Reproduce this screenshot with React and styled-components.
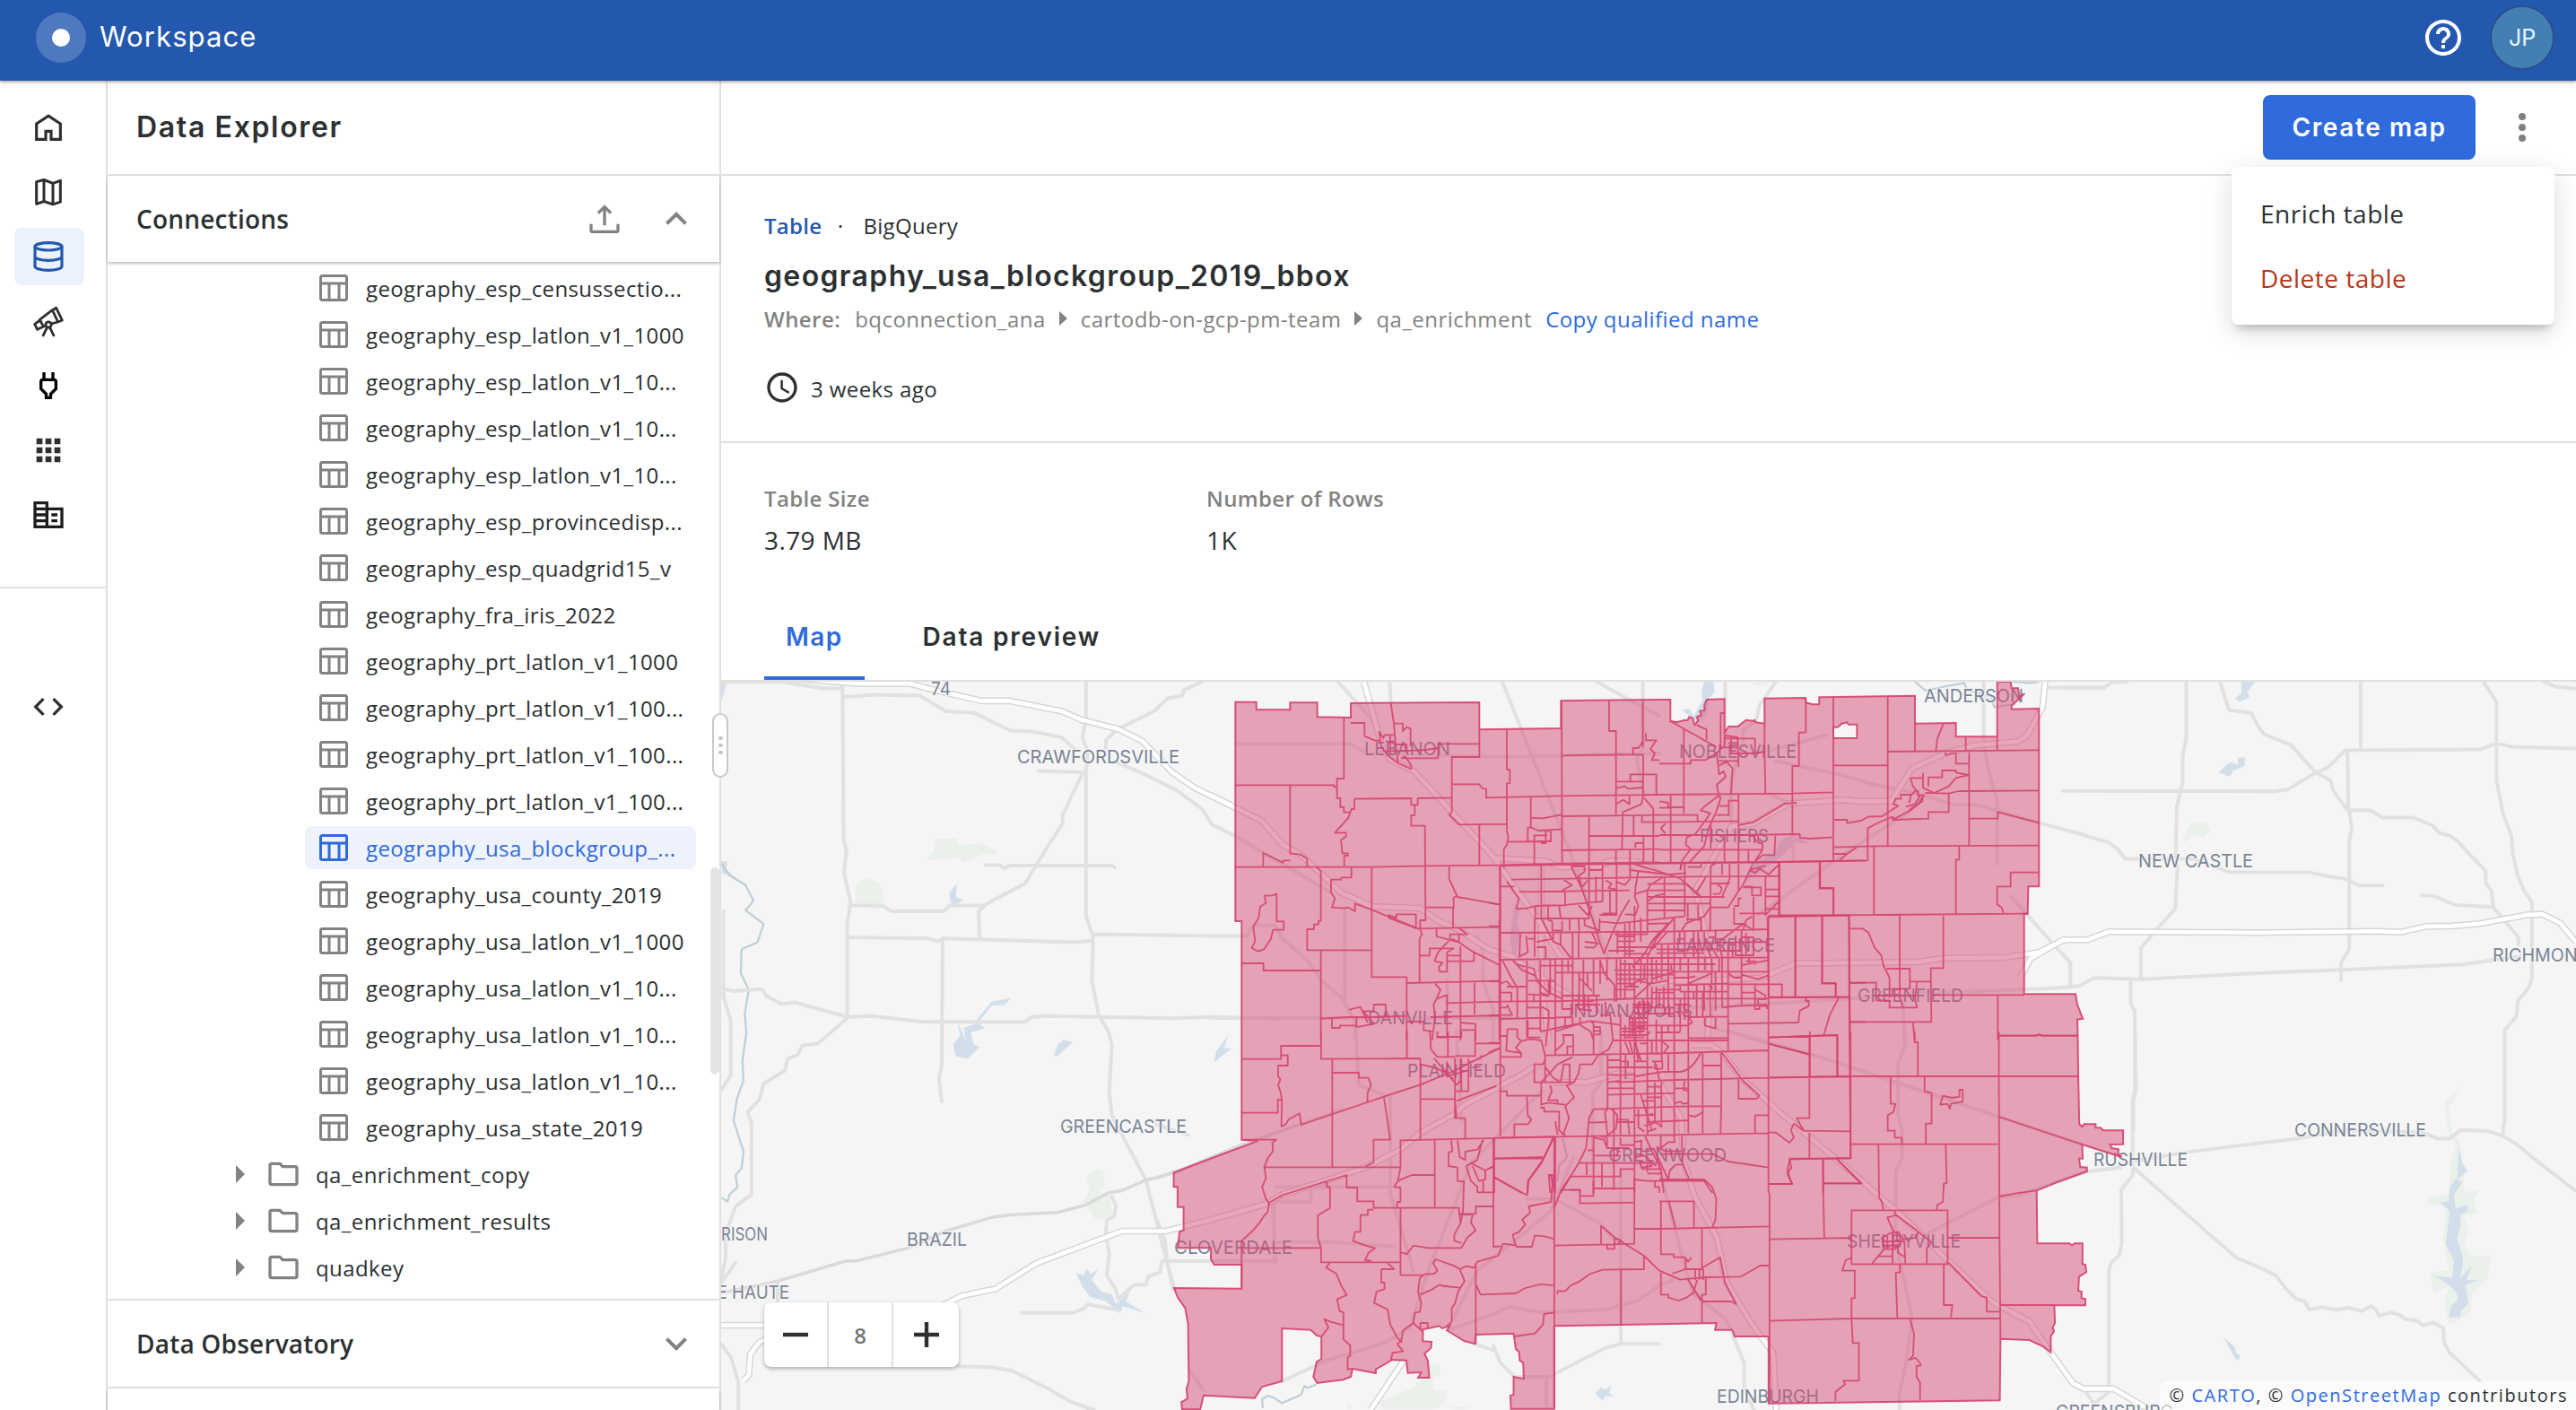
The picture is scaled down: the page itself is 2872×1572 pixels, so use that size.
import React from "react";
import styled, { createGlobalStyle } from "styled-components";
import {
  MdApps,
  MdCode,
  MdHelpOutline,
  MdAccessTime,
  MdExpandLess,
  MdExpandMore,
  MdOutlineFolder,
  MdOutlinePower,
} from "react-icons/md";

const c = {
  header: "#2458ae",
  primary: "#2f6bdb",
  text: "#2c3032",
  muted: "#828282",
  line: "#e0e0e0",
};
const sans = `"Open Sans", "Noto Sans", sans-serif`;
const display = `Inter, "Open Sans", sans-serif`;

const GlobalStyle = createGlobalStyle`
  *, *::before, *::after { box-sizing: border-box; }
  html, body { margin: 0; background: #fff; overflow: hidden; }
  body { font-family: ${sans}; color: ${c.text}; font-size: 24px; }
  svg { display: block; flex: none; }
`;

const Page = styled.div`
  display: flex;
  flex-direction: column;
  width: 2872px;
  height: 1572px;
  overflow: hidden;
`;

/* ---------- header ---------- */
const Header = styled.header`
  display: flex;
  align-items: center;
  height: 90px;
  flex: none;
  padding: 0 24px 6px 40px;
  background: ${c.header};
  color: #fff;
  box-shadow: 0 1px 4px rgba(0, 0, 0, 0.45);
  z-index: 2;
`;
const Logo = styled.div`
  display: grid;
  place-items: center;
  width: 56px;
  height: 56px;
  border-radius: 50%;
  background: rgba(255, 255, 255, 0.2);
  &::after {
    content: "";
    width: 20px;
    height: 20px;
    border-radius: 50%;
    background: #fff;
  }
`;
const Brand = styled.div`
  margin-left: 15px;
  margin-top: -3px;
  font: 400 31px/40px ${display};
  letter-spacing: 1.1px;
`;
const HeaderActions = styled.div`
  display: flex;
  align-items: center;
  gap: 28px;
  margin-left: auto;
`;
const Avatar = styled.div`
  display: grid;
  place-items: center;
  width: 72px;
  height: 72px;
  border-radius: 50%;
  border: 2px solid #2a4f8c;
  background: #437fb5;
  color: #e6f4ff;
  font: 400 25px/30px ${display};
`;

/* ---------- navigation rail ---------- */
const Body = styled.div`
  display: flex;
  flex: 1;
  min-height: 0;
`;
const Rail = styled.nav`
  width: 120px;
  flex: none;
  border-right: 2px solid ${c.line};
  padding-top: 20px;
`;
const RailGroup = styled.div`
  display: flex;
  flex-direction: column;
  gap: 8px;
  padding-left: 16px;
`;
const RailItem = styled.div`
  display: grid;
  place-items: center;
  width: 78px;
  height: 64px;
  padding-right: 2px;
  border-radius: 8px;
  color: ${(p) => (p.$active ? c.header : p.$color || c.text)};
  background: ${(p) => (p.$active ? "#ebf2fb" : "transparent")};
`;
const RailDivider = styled.div`
  height: 2px;
  margin: 48px 0 100px;
  background: ${c.line};
`;

/* ---------- explorer panel ---------- */
const Panel = styled.aside`
  display: flex;
  flex-direction: column;
  position: relative;
  width: 684px;
  flex: none;
  border-right: 2px solid ${c.line};
  background: #fff;
`;
const PanelTitle = styled.h1`
  display: flex;
  align-items: center;
  height: 106px;
  flex: none;
  margin: 0;
  padding: 0 32px 0;
  border-bottom: 2px solid ${c.line};
  font: 600 32px/40px ${display};
  letter-spacing: 1.65px;
`;
const Section = styled.div`
  display: flex;
  align-items: center;
  height: ${(p) => p.$height}px;
  flex: none;
  padding: 0 24px 0 32px;
  font-size: 28px;
  font-weight: 600;
  letter-spacing: 0.2px;
  border-top: ${(p) => (p.$ruled ? `2px solid ${c.line}` : "0")};
  border-bottom: ${(p) => (p.$ruled ? `2px solid ${c.line}` : "0")};
  box-shadow: ${(p) => (p.$ruled ? "none" : "0 2px 3px rgba(0,0,0,.26)")};
  z-index: 1;
  & > span { margin-right: auto; }
  & > svg { color: ${c.muted}; }
  & > svg + svg { margin-left: 36px; }
`;
const Tree = styled.div`
  display: flex;
  flex-direction: column;
  gap: 4px;
  flex: 1;
  padding-top: 5px;
`;
const Leaf = styled.div`
  display: flex;
  align-items: center;
  height: 48px;
  margin: 0 26px 0 220px;
  padding-left: 16px;
  gap: 20px;
  border-radius: 8px;
  white-space: nowrap;
  letter-spacing: 0.39px;
  color: ${(p) => (p.$active ? c.primary : c.text)};
  background: ${(p) => (p.$active ? "#edf2fc" : "transparent")};
  & > svg { color: ${(p) => (p.$active ? c.primary : c.muted)}; }
`;
const FolderRow = styled.div`
  display: flex;
  align-items: center;
  height: 48px;
  padding-left: 143px;
  letter-spacing: 0.41px;
  & > svg { color: ${c.muted}; }
  & > svg + svg { margin: 0 16px 0 23px; }
`;
const ScrollThumb = styled.div`
  position: absolute;
  right: 0;
  top: 877px;
  width: 10px;
  height: 231px;
  border-radius: 5px;
  background: #e4e6e6;
`;
const Handle = styled.div`
  position: absolute;
  right: -10px;
  top: 705px;
  width: 18px;
  height: 72px;
  z-index: 3;
  display: flex;
  flex-direction: column;
  align-items: center;
  justify-content: center;
  gap: 4px;
  background: #fff;
  border: 2px solid #c9c9c9;
  border-radius: 9px;
  & > i { width: 5px; height: 4px; border-radius: 2px; background: #c4c4c4; }
`;

/* ---------- main column ---------- */
const Main = styled.main`
  display: flex;
  flex-direction: column;
  flex: 1;
  min-width: 0;
  position: relative;
`;
const Toolbar = styled.div`
  display: flex;
  align-items: center;
  justify-content: flex-end;
  height: 106px;
  flex: none;
  padding: 0 56px 0 0;
  border-bottom: 2px solid ${c.line};
`;
const CreateButton = styled.button`
  width: 237px;
  height: 72px;
  margin-right: 48px;
  padding: 0;
  border: 0;
  border-radius: 8px;
  background: ${c.primary};
  color: #fff;
  font: 600 28px/36px ${display};
  letter-spacing: 1.6px;
`;
const Kebab = styled.div`
  display: flex;
  flex-direction: column;
  gap: 4px;
  & > i { width: 8px; height: 8px; border-radius: 50%; background: #7f7f7f; }
`;
const Menu = styled.div`
  position: absolute;
  right: 24px;
  top: 96px;
  width: 360px;
  padding: 16px 0;
  border-radius: 8px;
  background: #fff;
  box-shadow: 0 10px 10px -6px rgba(0, 0, 0, 0.2), 0 8px 30px rgba(0, 0, 0, 0.14);
  z-index: 4;
`;
const MenuItem = styled.div`
  display: flex;
  align-items: center;
  height: 72px;
  padding: 0 32px;
  font-size: 28px;
  letter-spacing: 0.5px;
  color: ${(p) => (p.$danger ? "#b8381b" : c.text)};
`;
const Details = styled.section`
  display: flex;
  flex-direction: column;
  height: 298px;
  flex: none;
  padding: 37px 48px 0;
  border-bottom: 2px solid ${c.line};
`;
const Line = styled.div`
  display: flex;
  align-items: center;
  height: ${(p) => p.$h}px;
  gap: ${(p) => p.$gap || 0}px;
  margin-top: ${(p) => p.$top || 0}px;
  color: ${(p) => p.$color || c.text};
  letter-spacing: ${(p) => p.$ls || 0}px;
  white-space: nowrap;
`;
const Strong = styled.span`
  font-weight: 600;
  margin-right: 1px;
  color: ${(p) => p.$color || "inherit"};
`;
const Dot = styled.span`
  width: 45px;
  padding-right: 6px;
  text-align: center;
`;
const Age = styled.span`
  padding-top: 3px;
`;
const TableName = styled.h2`
  margin: 17px 0 0;
  font: 600 32px/44px ${display};
  letter-spacing: 1.35px;
`;
const CopyLink = styled.span`
  color: ${c.primary};
`;
const Stats = styled.section`
  display: flex;
  height: 162px;
  flex: none;
  padding: 44px 48px 0;
`;
const Stat = styled.div`
  width: 493px;
  & > span { display: block; font-size: 24px; font-weight: 600; line-height: 36px; color: ${c.muted}; letter-spacing: 0.35px; }
  & > b { display: block; margin-top: 8px; font-size: 28px; font-weight: 400; line-height: 40px; letter-spacing: 0.4px; }
`;
const Tabs = styled.div`
  display: flex;
  gap: 41px;
  height: 104px;
  flex: none;
  padding: 0 48px;
  border-bottom: 2px solid ${c.line};
`;
const Tab = styled.div`
  display: flex;
  align-items: center;
  padding: 10px 24px 0;
  border-bottom: 4px solid ${(p) => (p.$active ? c.primary : "transparent")};
  color: ${(p) => (p.$active ? c.primary : c.text)};
  font: 600 28px/36px ${display};
  letter-spacing: ${(p) => p.$ls}px;
`;
const MapArea = styled.div`
  position: relative;
  flex: 1;
  min-height: 0;
  overflow: hidden;
  background: #f5f5f5;
`;
const ZoomControl = styled.div`
  position: absolute;
  left: 48px;
  bottom: 48px;
  display: grid;
  grid-template-columns: 72px 72px 73px;
  height: 72px;
  border-radius: 8px;
  background: #fff;
  color: ${c.text};
  box-shadow: 0 2px 4px rgba(0, 0, 0, 0.3);
`;
const ZoomCell = styled.div`
  display: grid;
  place-items: center;
  color: ${(p) => (p.$muted ? "#6f7577" : "inherit")};
  font-weight: 600;
  border-right: 2px solid ${c.line};
  &:last-child { border-right: 0; }
`;
const Attribution = styled.div`
  position: absolute;
  right: 0;
  bottom: 0;
  height: 32px;
  padding: 0 9px 0 11px;
  border-top-left-radius: 8px;
  background: rgba(255, 255, 255, 0.55);
  font-size: 20px;
  line-height: 31px;
  letter-spacing: 1.54px;
  white-space: nowrap;
  & > span { color: ${c.primary}; }
`;

/* ---------- icons ---------- */
const Stroke = ({ size = 40, w = 2, children }) => (
  <svg width={size} height={size} viewBox="0 0 24 24" fill="none" stroke="currentColor" strokeWidth={w}>
    {children}
  </svg>
);
const HomeIcon = () => (
  <Stroke w={1.9}><path d="M4 20V9.6L12 4.3L20 9.6V20H13.8V14.6H10.2V20Z" /></Stroke>
);
const MapIcon = () => (
  <Stroke w={1.8}><path d="M4 5.2L9 3.9L15 6.2L20 4.4V18.7L15 20.3L9 18.3L4 20Z M9 4V18.4 M15 6V20.2" strokeLinejoin="round" /></Stroke>
);
const DatabaseIcon = () => (
  <Stroke w={1.9}>
    <ellipse cx="12" cy="5.3" rx="9" ry="2.5" />
    <path d="M3 5.3V18.6c0 1.4 4 2.6 9 2.6s9-1.2 9-2.6V5.3 M3 12c0 1.4 4 2.6 9 2.6s9-1.2 9-2.6" />
  </Stroke>
);
const TelescopeIcon = () => (
  <Stroke w={1.7}>
    <path d="M14.6 4.6L17.2 3.2L21.2 11.4L18.4 12.6Z M14.6 4.6L6.2 11L8.6 15.6 M18.4 12.6L14 13.7 M6.4 11.4L2.8 14L4.6 17.6L8.8 15.6L10.2 15" strokeLinejoin="round" />
    <circle cx="12" cy="14.4" r="1.9" />
    <path d="M11.2 16L8.2 22.2 M12.8 16L15.8 22.2" />
  </Stroke>
);
const BuildingIcon = () => (
  <svg width="40" height="40" viewBox="0 0 24 24" fill="currentColor">
    <path d="M12 7V3H2v18h20V7H12zm-2 12H4v-2h6v2zm0-4H4v-2h6v2zm0-4H4V9h6v2zm0-4H4V5h6v2zm10 12h-8V9h8v10zm-2-8h-4v2h4v-2zm0 4h-4v2h4v-2z" />
  </svg>
);
const UploadIcon = () => (
  <Stroke>
    <path d="M3 15.4V19.6a1 1 0 0 0 1 1H20a1 1 0 0 0 1-1V15.4 M12 4V16.4 M7.7 8.2L12 3.9L16.3 8.2" />
  </Stroke>
);
const TableIcon = () => (
  <svg width="32" height="30" viewBox="0 0 32 30" fill="none" stroke="currentColor" strokeWidth="3">
    <rect x="1.5" y="1.5" width="29" height="27" rx="2" />
    <path d="M2 10H30 M11 10V28 M22 10V28" />
  </svg>
);
const Triangle = ({ w, h }) => (
  <svg width={w} height={h} viewBox="0 0 10 20" preserveAspectRatio="none" fill="currentColor">
    <path d="M0 0L10 10L0 20Z" />
  </svg>
);

/* ---------- map data ---------- */
// Every map sheet has its own origin and scale: [x, y, units per pixel in x, units per pixel in y].
const sheets = {
  nw: [1350, 760, 3, 3],
  ne: [1850, 760, 3, 3],
  sw: [1290, 1150, 2.8, 3],
  se: [1850, 1150, 2.8, 3],
  city: [1660, 950, 3, 3],
  west: [800, 740, 2.24, 1.8846],
  east: [2300, 740, 2.7413, 1.8846],
};
const outline = [
  ["nw", "82,68 152,68 152,94 265,94 265,70 356,70 356,118 468,120 468,72 898,69 898,160 1171,156 1171,64 1500,60"],
  ["ne", "37,60 37,132 60,135 80,130 95,128 100,118 112,122 118,145 130,130 125,118 140,112 136,98 152,95 150,80 158,60 218,58 218,170 232,150 262,150 290,128 318,132 318,126 322,136 352,140 352,56 488,54 490,70 512,76 535,76 535,52 855,47 855,140 992,138 992,184 1130,184 1130,0 1175,0 1178,22 1200,22 1204,50 1222,40 1178,80 1178,92 1270,90 1270,685 1234,685 1232,776 1220,776 1220,1045 1392,1045 1398,1080 1417,1127 1398,1130"],
  ["se", "1306,0 1308,150 1311,310 1320,318 1326,310 1362,310 1362,322 1378,322 1385,331 1448,331 1448,377 1407,378 1412,390 1434,394 1432,408 1443,420 1320,378 1322,425 1310,425 1314,453 1335,455 1335,468 1240,505 1178,532 1180,709 1280,709 1288,715 1296,709 1321,709 1321,778 1330,780 1333,805 1310,820 1308,868 1318,870 1318,892 1330,894 1330,916 1233,916 1235,975 1228,990 1232,1004 1222,1020 1222,1073 1200,1055 1155,1032 1065,1028 1063,1234 341,1244 341,1020 235,1020 228,998 174,998 178,975 0,979"],
  ["sw", "1240,985 1240,1262 1105,1262 1103,1218 1113,1215 1113,1155 1145,1162 1143,1108 1132,1100 1130,1072 1120,1062 1113,1010 995,1014 993,1045 960,1036 905,1000 914,985 890,993 880,985 850,992 830,996 830,1036 857,1038 855,1058 835,1078 845,1100 850,1158 815,1158 825,1140 783,1142 778,1100 735,1098 683,1130 683,1143 610,1128 605,1155 580,1165 500,1176 488,1155 498,1105 513,1095 513,1020 500,1018 480,998 390,993 390,1170 328,1188 305,1226 145,1217 135,1264 78,1264 76,1240 95,1228 92,1195 99,1170 97,980 88,925 65,890 53,858 264,860 264,780 178,780 168,762 168,724 65,724 70,670 83,665 83,587 64,587 64,520 52,520 52,472 200,412 315,366 264,362"],
  ["nw", "103,1200 103,801 82,801"],
];
const hole = [["ne", "582,152 597,152 610,140 628,136 632,143 661,143 661,189 582,189"]];

const toPath = (ring) =>
  "M" +
  ring
    .flatMap(([sheet, pts]) => {
      const [ox, oy, sx, sy] = sheets[sheet];
      return pts.split(" ").map((p) => {
        const [x, y] = p.split(",").map(Number);
        return `${(ox + x / sx).toFixed(1)} ${(oy + y / sy).toFixed(1)}`;
      });
    })
    .join("L") +
  "Z";

const blocks = {
  nw: "M82 346H412V352H422 M445 120V324H422V390H433V420H445V437H465 M265 346V575L300 578L322 592V618 M175 618V573L242 606V598H265 M82 620H540L718 616L968 614L1180 608L1500 604 M468 138H514V182L548 197H566 M602 72L612 140H642V165L655 152L668 158V215 M612 140L618 210L626 270 M562 166L570 215L590 245L625 272L670 292V280L650 250L638 256H760V222L720 228L640 232 M760 222V208H898 M562 166L576 188L582 178H616 M600 178V240 M575 232H650 M620 210H655V240 M585 200H618 M898 160V252H806V437L797 445L830 478L990 476 M480 392L670 390V412H692V390L806 388 M682 412V447H670V482H716L718 800 M480 392V426H470L460 455L415 505H452V518L435 530L440 574H458V582H446V618 M808 343H897L910 358H921V388L1171 382L1500 378 M990 160V294H1000V340H990V500L995 520L990 545L980 560V625 M1173 64L1175 606 M1332 64V165H1355V445 M1173 247L1357 244H1446 M1445 64V220 M1070 386V488H1060V535 M1070 455L1110 457L1171 445 M1070 488L1095 498L1171 494 M990 536L1110 534H1137V500H1120V540H1104 M1082 610V514H1125 M898 478V614 M1171 450L1500 446 M1265 450V605 M1265 516H1500 M1171 564L1500 560 M1445 172V200L1430 222L1412 222V244 M1455 172V196H1490L1470 225L1485 240L1475 262H1500 M1446 244V380 M1357 334H1446 M1403 334V310H1490V378 M1357 356L1385 350L1395 358L1446 354 M1357 408L1380 395L1400 410V378 M1446 380L1440 410L1378 436L1375 560 M1450 390L1480 425V605 M1414 446V514 M1442 446V470H1500 M1355 560V604 M1402 560V604 M1447 520V604 M1420 556V540H1447 M352 620L368 634V800H360V812H345V828H322V898H538V620 M368 898V1200 M205 715L180 716L184 740L165 752L160 790L142 820L148 868L137 890L158 902L178 895L200 862L208 830H244V802H220V710Z M103 942H176V966H368 M470 620V655H436V662H402V706L415 725L405 755L445 758L460 755L482 768V742L540 764L700 828V798H720 M538 764V988H655V1200 M595 780L620 790V778H686V825L595 790Z M718 755H810V822 M797 618V660L823 716L812 722V760 M823 720L870 728L968 746 M700 828L706 845L698 860V1010 M690 826L966 820 M655 1008L835 1004L967 1000 M835 885V1200 M882 1004V1112 M755 825V852L830 872L880 905L966 948 M830 825L858 845H800V860 M806 860L830 872V846 M880 905V935H790 M700 916H732V892H812L790 905V970H765L762 955L775 940L748 935L760 905L800 862 M790 916H835 M750 1010L768 1030L755 1060L745 1080L750 1120L740 1200 M758 1060L790 1048V1190H755 M792 1075L967 1070 M735 1122L967 1116 M655 1137H712V1166L740 1170 M835 1140L885 1145V1200 M835 1165H885 M368 1127L460 1122H585V1080H545V1102H510L545 1145L487 1155V1125 M463 1097L500 1088L525 1140 M405 1127V1158H432V1150H487 M540 1122L655 1118 M967 618V796H965V1200",
  ne: "M37 132L190 218 M82 160V442 M0 274H105V262H155L190 240L218 215V180 M125 145L158 160V195 M205 218V105H217 M0 378L445 374L582 370 M352 140V240L355 372 M220 190H320V240L352 234 M218 180L262 186L265 285 M195 265H262 M240 190V240H320 M230 205H262V220H200 M192 240L200 310L215 300L222 318L192 345L198 375L205 390L190 435L165 490L150 550L100 605 M240 372L245 290L225 268L200 280 M200 380L160 410L138 430L170 440L150 470L120 510L92 520L88 545L105 560L75 600L70 630 M0 400L30 405V420H80 M0 422H37 M0 446H128V468 M0 470L265 466 M0 513H265L470 510V522L505 525L582 520 M200 416H232V398H265V605 M190 446H232V416 M0 562H265 M38 380V605 M265 378V470 M20 475L5 490L20 508 M172 470V558 M218 513V605 M265 480L315 470L420 408L460 405 M445 280V508 M445 282H467V170H490V54 M298 562V605 M265 562H345L320 600 M330 515L332 540H345V562 M388 515L385 580H345L310 610 M318 515V540 M0 606L400 603L600 600L697 598V490L740 468L780 452 M582 52V600 M764 50V550 M582 280H762 M764 234L1270 229 M582 462H628V473L675 465L697 452L745 450L800 415 M582 554L718 550L1270 548 M718 550V780 M1036 232V548 M992 234V274H1036 M855 138V232 M950 140L930 190L925 230 M1025 186V229 M1130 184V229 M1036 366L1270 364 M1036 458H1132V436L1270 472 M955 230L958 246L992 236 M840 322H882V305 M840 322L848 350L858 362L845 378H808V392H790L783 410L800 415 M882 322V355L920 372L968 350L992 322L1034 312L992 304V297H946V320H900V350 M882 378L880 400L840 430L780 462L782 450 M885 378L865 410L835 430 M858 362L870 385L855 410L825 418 M842 378L836 405 M865 362V380H888 M780 462L900 458V436H968V374L890 372 M968 374L1000 366L1036 366 M536 603V692H582V780 M400 604V782L718 780L1232 776 M1003 548V595H992V776 M1270 638H1175V685H1130V745L1145 755L1152 776 M582 576H628L660 554 M600 600L628 576 M362 787L634 782 M362 787L366 1055 M455 787V1055 M544 787V1010H590V1052 M634 782L638 1200 M804 780V1062 M950 778V958H908L910 1138H638 M366 1055H638 M634 826H680L700 840L720 890L742 915L750 950L770 990V1058 M760 960H838V1027H780V1050 M838 1003H908 M638 1008L725 1006V1066H770V1090H862L855 1060L862 1005 M910 1048H1220 M1132 1048V1200 M1132 1184H1260L1268 1180L1280 1184H1400 M848 1138L854 1200 M730 1050H862 M806 1060L815 1090",
  sw: "M264 92H387V48H512 M512 0V92L822 90 M780 0V90 M822 90V360 M387 80H408V114H378V150L385 160L378 180L385 200L390 230L388 318L402 310L410 295L445 274L450 312L708 218L822 178L930 130L1070 55 M264 272H377V228H390 M547 94V452 M547 138H630V155H660L668 180L657 205V235 M708 218L728 362H676V438L650 452 M332 454H760V364L1240 352 M264 362H372L360 372L362 400L345 425L335 455L340 490L328 520L340 560L350 575L345 605L335 615L320 640L300 665L275 690L264 700V860 M345 575L390 548L592 480V522H625V568H676V590 M530 500V520H540V590L502 615V690L512 724V772H758 M262 724H512 M760 454L752 500L795 480H868 M752 500L740 520L760 522V570H750V590 M867 364V590 M676 590H943V610H995V585H1050 M676 596H658V614H635V670H618L612 700L640 712L680 725L660 740L650 765L670 768 M760 590V815H835 M760 738L780 745L800 716L845 724H950L968 690L995 665L980 640L985 612H945 M943 610L948 640L928 680V700L950 708 M918 364L922 400L910 405V450L938 455V500L958 502L955 600L948 640 M938 364L945 420L962 430V402L1000 395L1020 362 M965 450L1000 430L1015 365 M822 226H930V290H962V360 M930 90V225L935 290 M950 90V200H930 M972 90V200H945 M935 232L1060 182 M1050 360V720L1080 718 M1050 425H1205 M1050 485L1155 548L1160 498L1200 440L1240 352 M965 450L980 500L1000 520V538H1050 M980 440L1025 465V495L1005 500L985 450 M1018 500V538 M1025 465L1050 450 M822 110L870 122L905 140L935 178L948 165V90 M905 100V150L970 130 M852 0L855 60L875 85H930 M875 0V18H950V0 M908 0V85 M993 0V82H930 M995 40H1070 M970 105L1010 90L1012 80 M985 120L1010 118 M865 90L885 115L925 160 M1240 352V1262 M1240 590L1262 530L1290 485 M1262 530H1320V575L1490 572 M1362 500V550H1320 M1490 490V710L1240 716 M1386 712V650L1430 690L1520 750L1568 800 M1520 750V795L1390 797L1350 812L1320 835L1290 850L1275 868H1250V878 M1405 710V727H1428V690 M1430 690L1450 700L1440 708 M1448 797V980 M1490 660H1568 M1228 480L1235 510L1230 570L1160 585L1165 605L1140 630L1150 645L1130 670L1110 680L1120 715L1080 710L1065 750L1000 770L990 790L965 785L945 795L930 785L870 762L862 775L875 800L865 810L835 812L820 825L815 870L825 910L820 938L805 940L800 975 M1120 720H1170L1180 682L1210 685L1240 694 M995 775V1045 M945 795L960 835L940 870L930 910L920 925V970L905 985 M822 880L860 862L880 848L900 852L945 857 M895 848V856 M905 848V856 M995 845L1010 880L1120 876L1150 858L1200 845L1240 850 M1240 940L1208 945L1205 980L1180 1010L1115 1020 M540 772L528 790L560 810L575 850L592 882L562 895L570 935L582 940V1030L603 1050V1085L595 1090V1130L610 1128 M700 795H740L720 775 M700 795V840H710V862L685 870L678 908L720 930L728 980L750 1025L765 1040 M580 982L540 970L522 962L535 990L515 1018 M800 975L768 1000L762 1035L750 1045L768 1070L735 1075L730 1100 M800 975L830 1005 M822 995V975H845V992",
  se: "M344 20L556 12V150 M344 42L468 76 M470 0V150 M597 0V425H408L400 465L413 510H344 M797 0V36H807V150 M1060 0V150L1062 690 M1060 14H1175L1185 10L1195 14H1305 M344 154L597 150H1308 M722 150V242H737L730 270L713 280V332H735V355H757V377 M828 150V200L850 206V308H832V377 M597 377H1057 M877 245L885 215L915 222L937 218V195H947V235L910 242L907 258L900 242Z M1060 285L1320 378 M1060 552L1110 542L1175 532 M511 425V508H632L552 425 M511 508L515 690 M684 377L686 555L695 570L700 598 M894 377L897 508H888L885 570L868 580L865 595 M344 695L600 690 M600 598H900V778H600Z M900 690H1062L1065 1030 M600 756L582 765L571 800H610V892H600V960 M344 968L600 960H1065 M751 778V806H738L743 958 M888 778V915H915L910 955 M900 770L1005 885L1022 890V937H1065 M1065 915H1233 M600 960L604 1042H623V1168H575L580 1180L550 1205V1236 M782 960L795 1010L792 1085L780 1098L800 1092L815 1110V1118H803V1155L814 1175V1232 M737 598V615L712 622L732 672 M737 612L790 655L850 705L835 725V775 M695 690L720 675L745 670L760 690L750 710L735 728H700Z M695 702H765L768 775 M728 675V775 M665 775L700 730 M680 752H728 M745 710V740L768 755 M760 695L800 690L808 672 M712 680V728 M695 715H748 M742 668V700 M344 540V1244 M0 495H140L165 520L178 560L175 630L165 655 M0 660L341 652 M133 660V795 M0 568H108V655 M30 570L50 655 M5 570V745H45V755H80L90 770L100 755 M82 755V795L40 810 M135 790L190 755L205 840L240 912L225 903H135L100 850 M133 880V975 M145 825V880H133 M0 800L65 830L145 822L255 820L315 783H344 M90 830L130 900 M112 795V830 M125 795V830 M137 795V830 M82 795H137 M118 830L105 880 M5 800V880H28V890L60 900L85 890L110 870",
  city:
    // township lines and outer ring
    "M38 45L655 37L972 33L1260 28 M38 45V950 M38 955L350 950L935 940 M972 33V212 M935 215V1140 M935 212L1205 212 M935 215V352 M0 170L38 176 M0 248H38 M0 432H38 M0 548L38 546 M0 638H38 M0 670L38 655 " +
    // north west
    "M75 92L655 82L970 80 M60 98L100 155L92 190L125 188L155 180V222 M38 115H85 M100 133L470 128 M255 133V178L155 180 M175 45V222 M175 178H240L380 165 M198 178V222 M235 178L240 222 M250 92L278 110L245 128 M275 48H320V65L300 80L310 118L330 95 M275 48L310 120L345 220L370 300L385 340 M335 37V220 M358 82V165 M380 37V165 M335 60H380 M390 95L410 105L400 120L425 125 M405 128V210 M427 40V210H370 M380 205H427 M300 178L330 210L345 180 M153 222V350 M153 222H335V205 M175 222L215 300L240 310L275 355 M195 225L212 232V262H245V230 M300 225L302 270 M270 225V262 M320 222V245L370 262 M38 270L620 265L758 262L935 258 M105 272L102 350L130 335L125 280 M160 300L215 290V270 M160 318H190V355 M240 270V308 M300 270V355 M320 300L365 305L350 320L320 318 M370 222V268L345 270L360 300 M38 360L460 354L935 352 M130 290H152 " +
    // north
    "M472 40V90L455 110L427 100 M472 60L600 75L660 70 M485 40L560 62L640 88L700 145 M500 60L490 120L488 150L500 180L490 210L455 208 M470 160L440 210L400 300L385 340 M530 125V275 M490 140L530 128L540 110L580 85 M530 165L560 145L587 140 M587 82V220 M530 106H655 M530 128H655 M530 150H788 M530 172H740 M530 195H655 M370 232L430 238L655 215 M655 37V215 M640 60L645 37 M655 100L710 150 M725 85L693 135 M710 37V50H665 M742 45L740 262 M742 45L760 37 M765 110Q790 120 770 140H750 M805 40V90L780 150 M780 40V75 M742 105H805 M835 40V130L800 185H740L720 215L660 238L645 262 M880 45L850 110L835 130 M972 40L935 75L905 55L890 70L872 60L925 45 M925 80V210L970 165 M925 125H970 M925 148H970 M855 115H880V145H910V118H850 M925 190H970 M665 172V232 M700 172V230 M660 225H710V262 M820 185V240H860 M820 180H835V155H845 M885 150V262L850 240L820 262L770 300 M838 205H925 M880 215L860 228L850 262 " +
    // north centre grid
    "M430 262V340 M455 240V352 M470 235V352 M487 180V300 M508 220V300 M530 275H420 M530 240L600 238L545 300L520 340L480 385 M620 220L560 290L530 350 M575 262L540 305 M600 262L545 325 M430 282H487 M430 298H487 M430 318H560 M400 330H487 M455 340H540 M545 308L935 300 M560 325H770 M560 338H720 M638 262V308 M655 265V352 M685 262V352 M700 262V352 M640 290H655 M720 262L722 308L745 355 M758 258V308 M770 300L780 352 M800 300V440 M815 308V352 M825 280V345H860V270 M845 262V510 M885 285V345H845 M845 285H885 M770 330H845 M735 300L765 352 M735 285H758 M578 308V352 M600 308V352 " +
    // midtown and downtown grid
    "M127 360V620 M45 362L75 420L95 455V500 M80 362L110 395L160 415 M90 375L150 390L160 430L200 470L245 490 M172 360V600 M205 360V470 M222 360V500 M245 360V498 M280 270V545 M265 360V403 M302 400V500 M316 360V530 M350 355V480 M372 360V440 M372 362L385 405L420 445V500 M395 354V430 M172 380H280 M222 403H395 M127 430H222 M60 450H127 M38 440L60 432L80 455 M38 470L75 470V500 M127 475L200 480 M245 480H372 M150 475V500 M302 420L345 465 M330 403V450 M200 430V480L172 470 M38 500L245 498L500 490H800 M60 510L78 545H38 M95 500V556 M38 520H60 M127 520H172 M38 558L280 552 M172 515L200 530V556L190 650 M222 500V680 M245 500V525H280 M300 475V525L345 530 M320 475V520 M332 480V520 M360 480V540 M280 495L350 500 M290 510H372 M172 600L340 565L350 575V680 M222 600L300 575 M255 552V590 M280 552V575 M305 552V575 M130 590H172 M38 615H60 M127 620H172 M300 575L340 600L350 630 M350 585H372V610H350 M350 598H372 M405 540L415 630L400 660L365 680 M340 565L440 578 M372 545H405 M390 500V545 " +
    "M420 395H620 M440 375H620 M427 354V500 M440 354V470 M455 360V490 M470 370V450 M487 354V500 M508 354V440 M520 375V425 M530 354V490 M545 354V440 M560 360V432 M578 354V425 M600 354V440 M610 375V395 M430 410H620 M430 425H530 M545 425L620 400 M420 460H487V490H425 M487 488L540 440L500 430L470 450 M540 440L600 430 M430 440H487 M440 485V450 M455 450H500 M545 450V520 M560 450V520 M570 470V520 M585 450V520 M600 440V520 M545 470H620 M560 460H640 M500 500V560 M515 490V560 M530 490V560 M545 520H620 M480 520H560 M487 540H620 M470 555H530 M480 510H530 M505 498V520 M520 498V530 M535 500V545 M590 520V545 M605 520V545 M640 490V550 M655 467V560 M620 510H668 M620 535H668 M640 467H685V490 M668 375H758 M640 355V395 M620 375H668 M620 400H935 M700 352V400 M722 352V395 M668 440L745 405V355 M780 352V520 M770 354V400 M620 445L800 440 M745 405V460L735 440 M620 420H668 M668 420L690 415 M668 467H800 M640 445V467 M695 445V550 M720 440V530 M740 460V550 M758 400V530 M715 550V470 M800 405L820 420H845 M800 400V663 M845 378L935 362 M860 365H890V378 M845 410L900 425L935 412 M870 352V370 M800 490H935 M780 520L825 515L930 510 M890 445V525H905V515H930V525 M890 460L925 480V492H900V510 M800 442H980V485 M668 552L800 550 M845 470H890 " +
    // downtown core
    "M440 540V945 M455 578V625 M470 545V620 M480 555V610 M490 555V640L505 690 M505 560V612 M518 560V600 M530 560V945 M440 590H530 M445 600H520 M440 612H530L540 600 M450 620H520 M470 570H530 M470 580H560 M545 580H665L680 570L668 552 M560 560V670 M578 580V700 M560 603H640 M600 580V603 M640 545V600 M415 630H800 M667 352V940 M670 622H800 M455 635L470 672 M470 630L480 672 M490 630L500 700 M505 640H530 M545 630V672 M578 632L600 650L585 672 M508 580V600 M495 585H518 M475 600L490 590 " +
    "M190 680L400 676L625 672L935 663 M38 685H108V672L58 665L62 592H95V620L108 632L90 655L108 672 M108 632L140 625L175 630L188 680V770 M130 556V620 M245 612H282V680 M262 680V650H282 M222 665L250 640V612 M190 690L180 710H152V770H175L230 710L280 685 M190 720L215 755L240 770 M240 770L250 710H270V768 M175 770H285L300 740L305 710L345 710L365 680 M285 770L260 780L285 820L255 850L268 890L250 940L255 950 M38 800H60V815H175V770 M127 818L130 880L142 895L130 910H85V955 M205 780L210 800L198 830H230L228 845 M172 845L200 838L255 845 M172 855H185V868H235V930L250 945 M175 818V845 M222 900L230 945 " +
    // south side grid
    "M397 676V860L388 870L397 950 M398 696H440 M398 720H550 M398 745H487 M398 770L440 765 M457 676V760 M440 700H465V720 M487 480V1140 M487 700H530 M490 750L580 735H640Q680 730 708 672 M545 700H580V725H555V700 M500 672L510 700 M560 710L570 762 M600 672V735 M430 770L620 762L935 755L1205 750 M398 790H487 M398 812L622 806 M530 785H577 M508 812L545 930 M510 832H555 M350 860L668 850L775 850 M330 905L397 903 M350 860L335 890L325 990L300 1040 M418 860V945 M427 895H465L470 945 M410 860L430 880L425 925L400 945 M487 880H530L550 875 M430 903H487 M530 903L668 897 M520 915L560 905L580 920 M530 935L560 925 M555 770V900 M577 765V920 M510 880H555 M530 820H577 M620 220V970 M622 790H668 M655 765L650 795L668 800 M622 840L640 835L650 842L668 838 M668 880L690 885L715 870 M715 672V940 M777 670V850L775 940 M715 714H777 M500 860V920L520 935 " +
    "M350 950V1140 M350 955L385 962L395 990H470 M370 950L395 955V990 M330 997H350 M350 1015H430V997 M300 1040H487 M327 1040V1080 M270 1085H440V1060L487 1060 M418 950V1130 M440 955V980H487 M378 1040V1120 M350 1125H487 M215 955L180 1030L130 1100V1140 M222 950V1140 M18 958V1140 M18 1025L180 1020 M0 1060L18 1050 M18 1088L110 1140 M205 1140L200 1080H215L210 1140 M240 1140L300 1040 M270 1130H305V1140 M520 945L545 1000L575 1060L585 1140 M487 970L510 965L508 1010L530 1020L545 1050L510 1055L505 1035L530 1040 M540 1000H510 M487 1020L520 1015 M487 1040H570V1060H510 M575 950V990L600 970H625 M550 990L600 1095L605 1065L625 1045H648 M560 985L590 1000H648 M487 1095L530 1100H720L748 1140 M555 1100V1120H570V1140 M530 1075H575 M575 1010H610V995 M600 1010H625 M645 945L648 1040L670 1095 M625 1010H750L800 1035L935 1055 M530 1040V1070 M540 1035L560 1050 " +
    // south east
    "M1025 215V485 M1115 215V438H1160V485 M1205 212V484L1210 1023L1005 1028L1012 1055L998 1075L1015 1110H935 M1108 33V120H1153V212 M802 574L1035 570L1040 530L1070 515V498H1060V487 M935 487L1205 484 M1205 437H1260 M1210 568H1260 M1170 487L1140 545L1120 612 M935 620L1165 612V750 M1072 615V750 M935 640L1072 677 M1072 750V890H1030L1052 932L1210 934 M1072 940V1023 M1020 908L1052 932 M780 672L850 765L905 815L895 825H835V760 M890 940V880H935 M935 938H960L1005 972L1020 955L1010 930L1020 908 M1118 1028V1140 M1165 1028L1245 1108H1118 M758 555V590L722 580V555",
};

const roads = {
  west: "M312 38L315 370L322 390L316 440L332 500L324 545V745 M10 38H160L265 52H310 M312 70L390 65L505 67L570 100L640 103L730 140L790 143L860 155L890 178 M920 38V120L911 155L925 185L920 228V530L938 575L935 665L952 740L975 770L985 800L978 900L985 950L1045 1045L1070 1085L1100 1185L1120 1250L1140 1310 M1210 38L1165 55L1160 68L1125 72L1090 100L1000 137L970 160V180 M990 205L1060 230L1145 265L1210 305L1235 338L1293 362L1530 480 M800 225L912 228L862 318L862 335L820 390L768 462L715 485L665 508H580L565 520H435L410 508H332 M670 423H705L715 430L730 424H985L992 428 M665 510L652 520L655 577 M327 575L525 577L550 583L565 577L890 585L938 582 M935 568L1310 573 M562 577L560 845L553 870L560 920 M10 682L40 688L110 683L122 698L160 715L195 712L324 742L385 740L510 752L765 753L785 742L820 740L1140 745L1230 742L1400 746 M324 745L250 798L212 802L200 822L175 830L168 855L115 882L105 915L75 942L85 965V1115L45 1140L20 1200V1250L10 1290 M45 1258L10 1300 M10 1430L35 1460L52 1510V1568 M15 520V700L33 750V865L10 895 M600 1476L685 1478L735 1485L830 1525L880 1550L940 1568 M760 1364H885L915 1355L925 1346L1000 1358 M985 1120L995 1140L990 1162L972 1168L970 1200L978 1240L972 1285L995 1315L1000 1335L1040 1305H1070L1075 1288L1105 1278L1110 1255H1390V1130H1480 M150 1298V1340 M1095 968L1175 990",
  east: "M0 50H125L155 38H195 M377 38V155L366 195V250L348 300L345 400L350 430L343 515L290 555L238 598V660 M480 38L507 97L575 103L600 135L615 148L695 170L775 230L818 245L825 265L845 285L870 308H940L975 323H1070L1130 340L1150 355L1185 362L1210 375L1235 395L1292 435V460L1310 478L1316 512L1392 575V590 M910 38V180 M0 267L640 268L685 265L770 230L810 218L862 182L1275 180L1325 167L1375 175L1568 178 M870 182L872 295L883 345L875 370V600L850 628V665 M1285 38L1325 80V245L1345 315L1370 360L1375 400L1390 445L1410 478L1433 500V660L1425 680L1390 708L1387 740L1350 770V960L1343 992 M1470 38L1505 48L1568 53 M0 348L138 375L168 390L190 410L400 410L510 438H750L815 447L870 453L902 466H977 M1097 486L1133 488L1200 507L1315 511 M0 610L22 628V678 M0 680L50 677L95 660L240 663L535 652L850 643L1220 632L1320 622L1400 615 M207 663V715L220 730V898L213 915V1075L178 1105L180 1215L172 1243L148 1258L140 1275V1530L95 1555L70 1530 M75 1067L160 1060L215 1045L390 1025L715 998L860 980L1100 985L1145 998H1180L1215 980L1300 982L1343 992L1388 1010L1430 1035L1568 1108 M215 1058L345 1137L530 1248L605 1270L650 1285L680 1312L710 1333L740 1340L752 1357L790 1352L835 1358L870 1353L912 1360L942 1350L955 1356L967 1370L1000 1363L1030 1368L1045 1377L1080 1380L1100 1390L1130 1384L1162 1395L1165 1425L1180 1447L1210 1465L1225 1475L1275 1508",
  nw: "M82 208H470L520 240L965 252L1500 240 M425 0L545 135 M598 0L602 72 M975 0L1205 580L1330 930 M1290 0L1500 115 M1445 0V220L1425 260L1450 390 M448 760V1080L480 1130L485 1200 M0 850H120L140 815H215L240 860L320 930L370 1000L440 1060L480 1130 M0 1125H1000 M790 1000V1080 M890 850L910 900V1000L945 1100V1200",
  ne: "M220 0V240 M390 0L335 80L325 125L280 165V210L240 330V470 M1290 20H1490 M1085 0V215L1100 290L1130 400V610 M350 235L560 178 M390 265L610 312L720 345L850 370L975 410L1060 412L1270 472L1420 512 M370 375L430 405 M330 780L400 730L640 560L830 440L885 378 M0 1095L230 1085L640 1060L900 1040L1220 1030L1370 1022 M1175 718L1325 885L1375 940V1020 M190 1160L400 1220 M448 515V600 M815 1060L820 1200",
  sw: "M0 490L52 470 M0 630L25 700L30 760L50 860 M100 1130L145 1200 M390 1170L530 1100L715 1040L790 990L850 790L980 440L1200 200 M905 1000L1040 950L1100 920L1200 940L1400 930L1500 900L1568 850 M1050 1050L1070 1105L1115 1155H1225L1260 1135L1400 1058L1448 1045H1568 M1448 460V1045 M620 0L630 180L728 220V540L800 800 M925 960L1000 800L1230 600L1300 420 M372 520H730 M480 520V570H360L370 770 M370 705H560L740 720 M1155 560H1240L1380 640L1440 710 M935 0L950 300 M1386 0V170L1360 210V440 M993 1045L1050 1066 M1215 1160V1250",
  se: "M220 0L500 85L1060 285L1320 378 M768 0V40L745 110V280L758 330V420L738 470V610L735 690L790 960L770 1110L750 1210V1266 M830 680L1060 552H1110L1335 468L1440 455 M0 850L45 830 M0 460L90 830L110 880L210 965L265 1110V1190L295 1266 M1485 0L1488 200L1480 230V330",
};
const rail =
  "M-4 1325L10 1322L150 1297L320 1255L345 1255L475 1228L570 1192L685 1163L730 1158L850 1153L920 1137L975 1112L1010 1107L1070 1085L1140 1070L1310 1010L1568 935";

const highways = {
  west: "M180 30L355 42H480L555 58L660 78H730L860 100L910 118L1000 137L1060 162L1135 228L1190 260L1293 302 M500 1372L570 1345L610 1328L695 1313L795 1260L1010 1192H1120L1225 1170L1370 1135L1410 1115L1568 1073 M10 1390H116 M65 1505L78 1495L82 1450L105 1425L120 1420",
  nw: "M0 380L170 465L240 545L300 578L435 705L540 752L700 758L760 800L830 830L930 895L1010 920L1090 980L1200 1050 M512 0L575 225L600 260L680 300L940 580L1090 790L1170 920 M940 590L1120 600L1170 620L1300 618L1330 600H1420L1500 640 M1105 620V1000L1130 1200",
  ne: "M1290 0L1282 85L1230 180L1200 200L1060 212L960 238L845 290L775 400H660L625 395L430 408L315 475L240 485L180 590L120 700L150 820L175 1000L160 1200 M0 1010L30 1000H180L340 990L460 942L860 938L950 925L1160 922L1270 905L1350 865H1365",
  sw: "M668 1264L770 1100 M392 547L650 455L760 395L820 340L930 275L960 245L1060 190L1100 165L1130 150L1190 110 M1240 170H1340L1440 140L1490 150",
  se: "M100 45H160L195 70L260 160L370 265L600 470L745 605L875 740L1040 905L1155 970L1222 1073L1290 1175L1325 1195H1418L1530 1266 M0 170L68 290L75 430L110 550L180 690L210 840L290 980L355 1075L365 1266",
  east: "M-130 660L-100 620L0 580H75L140 563L600 565L960 562L1032 564L1110 552L1190 551L1275 546L1415 528L1465 526L1520 545L1568 585",
};

const water = {
  west: "M735 702L685 710L650 745L640 758L615 765L620 790L600 755L605 782L588 800L595 825L625 830L655 805L640 800L632 775L668 765L650 755L685 718L715 717Z M840 822L850 800L865 790L888 795L860 815L848 825Z M1240 838L1245 815L1275 780L1265 808L1285 808L1258 825Z M578 482L598 462L595 490L614 496L592 508L582 500Z M895 1280L915 1285L920 1270L932 1282L950 1272L935 1295L960 1320L985 1325L995 1345L1030 1318L1020 1340L1070 1365L1012 1350L1005 1365L970 1340L930 1330L912 1310Z M8 415H25L22 432L50 452L12 440Z M8 38L22 42L10 80Z",
  east: "M545 38H588L565 58L570 70L540 80L525 73L545 62Z M475 228L510 207L535 212V197H556L555 215L520 225L510 237Z M1210 1020L1222 1050L1236 1065L1205 1085L1222 1088L1195 1115L1200 1145L1236 1137V1150L1215 1158V1180L1205 1210L1222 1245V1260L1215 1290L1250 1265L1232 1295H1268L1230 1305L1240 1345L1215 1360V1372L1180 1374L1185 1350L1205 1338V1325L1182 1305L1138 1287L1190 1290L1195 1255L1170 1220L1182 1150L1150 1132L1178 1130L1182 1100L1205 1080Z M490 1415L525 1435L530 1448L540 1452V1460L530 1463L510 1440Z",
  ne: "M150 0H180L185 35L165 55L160 110L125 140L110 120L75 95L100 90L115 115L145 60L140 35Z M440 515L510 540L450 540L415 580L380 605L330 640L290 670L310 610L390 570L405 530Z",
  nw: "M1015 740L1035 760L1025 800L1035 850L1020 915H1010L1000 860Z",
  sw: "M1368 1210L1385 1190L1400 1200L1418 1182L1412 1210L1428 1222L1400 1218L1390 1235Z",
};
const rivers = {
  west: "M10 420L30 445L70 465L90 498L70 518L115 547L100 585L60 600L58 650L78 685L68 735L72 775L62 835L65 875L48 915L40 960L65 1025L60 1060L45 1075L50 1100L30 1115L25 1130L10 1122",
  sw: "M330 1260L328 1230L345 1218L365 1225L390 1243L450 1215L460 1185L470 1192L498 1180 M1265 350L1280 420L1255 450L1250 500",
  ne: "M855 0L890 30L960 15L1020 5L1030 30L1080 40L1110 50L1120 85L1190 75 M1180 0L1240 5L1270 0",
};
const parks = {
  west: "M543 367H598V382L660 377L700 395L690 402L660 400L615 418L600 408L523 412L540 395Z M345 465L375 450L405 462L418 495L400 518L375 508L343 510Z M920 1080L950 1060L968 1070L965 1100L950 1110L980 1115L985 1160L945 1168L912 1130L930 1105Z",
  east: "M1225 878L1195 915L1180 935L1190 985L1210 1000L1225 1060V1110L1272 1105L1255 1130L1265 1155L1225 1160L1242 1190L1225 1220L1250 1245H1308L1300 1290L1250 1325L1245 1365L1180 1388L1165 1340L1180 1310L1135 1320L1120 1278L1180 1275L1162 1210L1170 1140L1112 1135L1120 1120L1180 1115L1185 1050L1200 1010L1172 975L1168 920L1210 890Z M390 335H440L452 350L430 366L400 360L370 376L368 366Z",
  sw: "M850 1110H880L885 1150L862 1160V1200H905L900 1240L870 1264H700V1235L750 1215L780 1200L800 1190L820 1160H850Z M595 1245H605V1264H595Z M920 1255H970V1264H920Z",
  ne: "M320 0H360V14L310 12Z",
};

// [name, left, right, middle of the capitals]
const places = [
  ["74", 1038, 1060, 768],
  ["CRAWFORDSVILLE", 1134, 1315, 843.5],
  ["GREENCASTLE", 1182, 1323, 1256],
  ["BRAZIL", 1011, 1078, 1381.5],
  ["HARRISON", 769, 856, 1376],
  ["TERRE HAUTE", 752, 880, 1440.5],
  ["CLOVERDALE", 1309, 1441, 1390.5],
  ["LEBANON", 1521, 1617, 835],
  ["DANVILLE", 1525, 1620, 1135],
  ["INDIANAPOLIS", 1749, 1887, 1127],
  ["NOBLESVILLE", 1872, 2003, 838],
  ["FISHERS", 1895, 1972, 932],
  ["LAWRENCE", 1868, 1979, 1054],
  ["ANDERSON", 2145, 2256, 776],
  ["GREENFIELD", 2071, 2189, 1110],
  ["PLAINFIELD", 1569, 1679, 1194],
  ["GREENWOOD", 1793, 1925, 1288],
  ["SHELBYVILLE", 2059, 2186, 1384],
  ["RUSHVILLE", 2334, 2439, 1293],
  ["EDINBURGH", 1914, 2028, 1557],
  ["GREENSBURG", 2292, 2423, 1574],
  ["NEW CASTLE", 2384, 2512, 960],
  ["RICHMOND", 2779, 2888, 1064.5],
  ["CONNERSVILLE", 2558, 2705, 1259.5],
];

const Layer = ({ data, ...rest }) =>
  Object.entries(data).map(([sheet, d]) => {
    const [x, y, sx, sy] = sheets[sheet];
    return (
      <g key={sheet} transform={`translate(${x} ${y}) scale(${1 / sx} ${1 / sy})`}>
        <path d={d} vectorEffect="non-scaling-stroke" fill="none" strokeLinejoin="round" {...rest} />
      </g>
    );
  });

const BaseMap = () => (
  <svg width="2068" height="812" viewBox="804 760 2068 812">
    <Layer data={parks} fill="#eaf0ea" />
    <Layer data={water} fill="#d2dfea" />
    <Layer data={rivers} stroke="#bfced5" strokeWidth="2.2" />
    <Layer data={roads} stroke="#e1e1e1" strokeWidth="4" strokeLinecap="round" />
    <Layer data={{ west: rail }} stroke="#dadada" strokeWidth="3.6" />
    <Layer data={highways} stroke="#d6d6d6" strokeWidth="7.6" />
    <Layer data={highways} stroke="#ffffff" strokeWidth="4.6" />
    <g fontFamily={display} fontSize="20" fill="#7a8595" stroke="#f5f5f5" strokeWidth="3" strokeOpacity="0.7" paintOrder="stroke">
      {places.map(([name, x1, x2, y]) => (
        <text key={name} x={x1} y={y + 7.4} textLength={x2 - x1} lengthAdjust="spacingAndGlyphs">
          {name}
        </text>
      ))}
    </g>
    <path d={toPath(outline) + toPath(hole)} fillRule="evenodd" fill="#d54d77" fillOpacity="0.5" stroke="#d4426f" strokeWidth="2" strokeOpacity="0.9" />
    <Layer data={blocks} stroke="#d4426f" strokeWidth="1.8" strokeOpacity="0.88" />
  </svg>
);

/* ---------- content ---------- */
const tables = [
  "geography_esp_censussectio...",
  "geography_esp_latlon_v1_1000",
  "geography_esp_latlon_v1_10...",
  "geography_esp_latlon_v1_10...",
  "geography_esp_latlon_v1_10...",
  "geography_esp_provincedisp...",
  "geography_esp_quadgrid15_v",
  "geography_fra_iris_2022",
  "geography_prt_latlon_v1_1000",
  "geography_prt_latlon_v1_100...",
  "geography_prt_latlon_v1_100...",
  "geography_prt_latlon_v1_100...",
  "geography_usa_blockgroup_...",
  "geography_usa_county_2019",
  "geography_usa_latlon_v1_1000",
  "geography_usa_latlon_v1_10...",
  "geography_usa_latlon_v1_10...",
  "geography_usa_latlon_v1_10...",
  "geography_usa_state_2019",
];
const folders = ["qa_enrichment_copy", "qa_enrichment_results", "quadkey"];

export default function App() {
  return (
    <Page>
      <GlobalStyle />
      <Header>
        <Logo />
        <Brand>Workspace</Brand>
        <HeaderActions>
          <MdHelpOutline size={48} />
          <Avatar>JP</Avatar>
        </HeaderActions>
      </Header>
      <Body>
        <Rail>
          <RailGroup>
            <RailItem><HomeIcon /></RailItem>
            <RailItem><MapIcon /></RailItem>
            <RailItem $active><DatabaseIcon /></RailItem>
            <RailItem><TelescopeIcon /></RailItem>
            <RailItem $color="#000"><MdOutlinePower size={40} /></RailItem>
            <RailItem><MdApps size={40} /></RailItem>
            <RailItem $color="#1b1d1e"><BuildingIcon /></RailItem>
          </RailGroup>
          <RailDivider />
          <RailGroup>
            <RailItem><MdCode size={40} /></RailItem>
          </RailGroup>
        </Rail>
        <Panel>
          <PanelTitle>Data Explorer</PanelTitle>
          <Section $height={96}>
            <span>Connections</span>
            <UploadIcon />
            <MdExpandLess size={48} />
          </Section>
          <Tree>
            {tables.map((name, i) => (
              <Leaf key={i} $active={i === 12}>
                <TableIcon />
                {name}
              </Leaf>
            ))}
            {folders.map((name) => (
              <FolderRow key={name}>
                <Triangle w={10} h={20} />
                <MdOutlineFolder size={40} />
                {name}
              </FolderRow>
            ))}
          </Tree>
          <Section $height={100} $ruled>
            <span>Data Observatory</span>
            <MdExpandMore size={48} />
          </Section>
          <Section $height={24} />
          <ScrollThumb />
          <Handle><i /><i /><i /></Handle>
        </Panel>
        <Main>
          <Toolbar>
            <CreateButton>Create map</CreateButton>
            <Kebab><i /><i /><i /></Kebab>
          </Toolbar>
          <Details>
            <Line $h={36} $ls={0.3}>
              <Strong $color={c.header}>Table</Strong>
              <Dot>·</Dot>
              <span>BigQuery</span>
            </Line>
            <TableName>geography_usa_blockgroup_2019_bbox</TableName>
            <Line $h={36} $top={7} $gap={15} $ls={0.45} $color={c.muted}>
              <Strong>Where:</Strong>
              <span>bqconnection_ana</span>
              <Triangle w={9} h={16} />
              <span>cartodb-on-gcp-pm-team</span>
              <Triangle w={9} h={16} />
              <span>qa_enrichment</span>
              <CopyLink>Copy qualified name</CopyLink>
            </Line>
            <Line $h={40} $top={39} $gap={12} $ls={0.4}>
              <MdAccessTime size={40} />
              <Age>3 weeks ago</Age>
            </Line>
          </Details>
          <Stats>
            <Stat><span>Table Size</span><b>3.79 MB</b></Stat>
            <Stat><span>Number of Rows</span><b>1K</b></Stat>
          </Stats>
          <Tabs>
            <Tab $active $ls={1.4}>Map</Tab>
            <Tab $ls={1.8}>Data preview</Tab>
          </Tabs>
          <MapArea>
            <BaseMap />
            <ZoomControl>
              <ZoomCell>
                <Stroke size={48} w={2.2}><path d="M5 12H19" /></Stroke>
              </ZoomCell>
              <ZoomCell $muted>8</ZoomCell>
              <ZoomCell>
                <Stroke size={48} w={2.2}><path d="M5 12H19M12 5V19" /></Stroke>
              </ZoomCell>
            </ZoomControl>
            <Attribution>
              © <span>CARTO</span>, © <span>OpenStreetMap</span> contributors
            </Attribution>
          </MapArea>
          <Menu>
            <MenuItem>Enrich table</MenuItem>
            <MenuItem $danger>Delete table</MenuItem>
          </Menu>
        </Main>
      </Body>
    </Page>
  );
}
